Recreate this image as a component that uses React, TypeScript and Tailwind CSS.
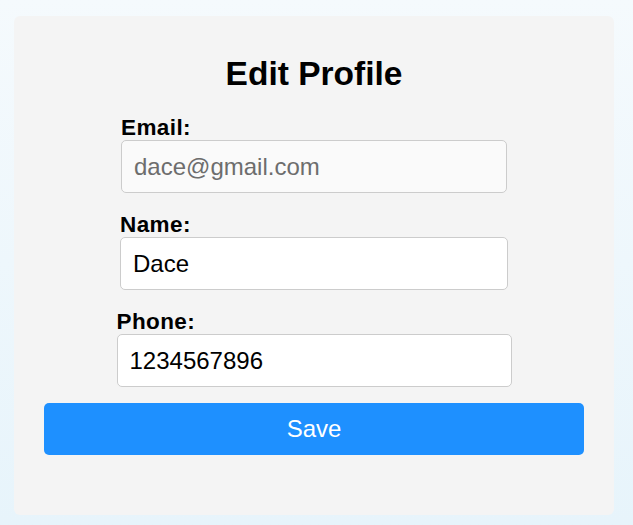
import React from 'react';

const font = { fontFamily: '"Liberation Sans", Arial, sans-serif' };

const Field: React.FC<{ label: string; value: string; width: string; disabled?: boolean }> = ({
  label,
  value,
  width,
  disabled,
}) => (
  <div className={`mx-auto flex flex-col ${width}`}>
    <label className="text-[22.5px] leading-[23px] font-bold tracking-[0.4px] text-black">{label}</label>
    <input
      readOnly
      value={value}
      className={
        disabled
          ? 'mt-[1px] h-[53px] rounded-[5px] border border-[#cccccc] bg-[#fafafa] px-3 text-[24px] text-[#6d6d6d] outline-none'
          : 'mt-[1px] h-[53px] rounded-[5px] border border-[#cccccc] bg-white px-3 text-[24px] text-black outline-none'
      }
    />
  </div>
);

export default function App() {
  return (
    <div
      style={font}
      className="min-h-screen w-full bg-gradient-to-b from-[#f5fafd] to-[#e7f4fb] pt-[16px] pl-[14px]"
    >
      <div className="flex w-[600px] flex-col rounded-[6px] bg-[#f4f4f4] px-[30px] pt-[38px] pb-[60px]">
        <h2 className="text-center text-[33.5px] leading-[40px] font-bold text-black">Edit Profile</h2>
        <div className="mt-[22px] flex flex-col gap-[20px]">
          <Field label="Email:" value="dace@gmail.com" width="w-[386px]" disabled />
          <Field label="Name:" value="Dace" width="w-[388px]" />
          <Field label="Phone:" value="1234567896" width="w-[395px]" />
        </div>
        <button className="mt-4 h-[52px] w-full rounded-[5px] bg-[#1e90ff] text-[24px] text-white">
          Save
        </button>
      </div>
    </div>
  );
}
